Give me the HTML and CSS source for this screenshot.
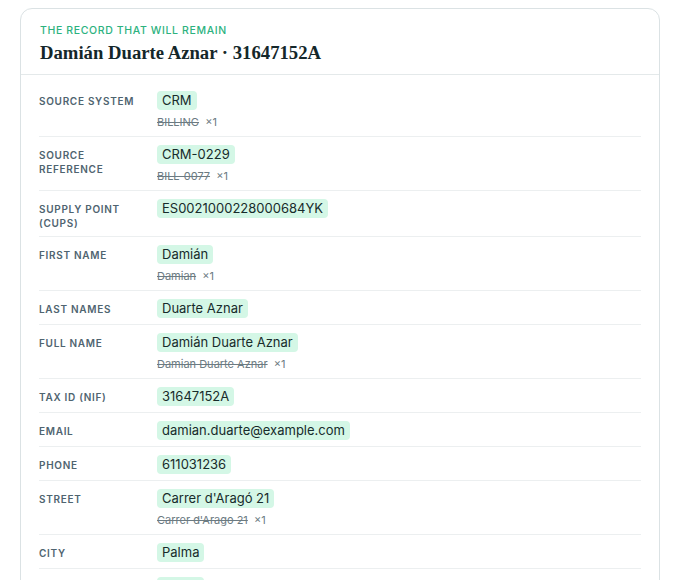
FILE: index.html
```html
<!DOCTYPE html>
<html lang="en">
<head>
  <meta charset="UTF-8">
  <title>Merge preview</title>
  <link rel="stylesheet" href="styles.css">
</head>
<body>

  <!-- Surviving record after the merge -->
  <section class="card">
    <header class="card-head">
      <div class="eyebrow">The record that will remain</div>
      <h1 class="title">Damián Duarte Aznar · 31647152A</h1>
    </header>

    <div class="fields">
      <div class="row">
        <div class="label">Source system</div>
        <div class="value">
          <span class="pill">CRM</span>
          <span class="old"><s>BILLING</s> ×1</span>
        </div>
      </div>
      <div class="row">
        <div class="label">Source reference</div>
        <div class="value">
          <span class="pill">CRM-0229</span>
          <span class="old"><s>BILL-0077</s> ×1</span>
        </div>
      </div>
      <div class="row">
        <div class="label">Supply point (CUPS)</div>
        <div class="value">
          <span class="pill">ES0021000228000684YK</span>
        </div>
      </div>
      <div class="row">
        <div class="label">First name</div>
        <div class="value">
          <span class="pill">Damián</span>
          <span class="old"><s>Damian</s> ×1</span>
        </div>
      </div>
      <div class="row">
        <div class="label">Last names</div>
        <div class="value">
          <span class="pill">Duarte Aznar</span>
        </div>
      </div>
      <div class="row">
        <div class="label">Full name</div>
        <div class="value">
          <span class="pill">Damián Duarte Aznar</span>
          <span class="old"><s>Damian Duarte Aznar</s> ×1</span>
        </div>
      </div>
      <div class="row">
        <div class="label">Tax ID (NIF)</div>
        <div class="value">
          <span class="pill">31647152A</span>
        </div>
      </div>
      <div class="row">
        <div class="label">Email</div>
        <div class="value">
          <span class="pill">damian.duarte@example.com</span>
        </div>
      </div>
      <div class="row">
        <div class="label">Phone</div>
        <div class="value">
          <span class="pill">611031236</span>
        </div>
      </div>
      <div class="row">
        <div class="label">Street</div>
        <div class="value">
          <span class="pill">Carrer d'Aragó 21</span>
          <span class="old"><s>Carrer d'Arago 21</s> ×1</span>
        </div>
      </div>
      <div class="row">
        <div class="label">City</div>
        <div class="value">
          <span class="pill">Palma</span>
        </div>
      </div>
      <div class="row">
        <div class="label">Postal code</div>
        <div class="value">
          <span class="pill">07013</span>
        </div>
      </div>
    </div>
  </section>

</body>
</html>
```

FILE: styles.css
```css
html {
  overflow: hidden;
}

body {
  margin: 0;
  padding: 8px 20px;
  background: #fff;
  font-family: Inter, "Noto Sans", sans-serif;
  color: #172b2b;
}

.card {
  border: 1px solid #dbe2e4;
  border-radius: 12px;
  background: #fff;
}

.card-head {
  padding: 15px 19px 10px;
  border-bottom: 1px solid #e4e9ea;
}

.eyebrow {
  font-size: 10.5px;
  line-height: 14px;
  font-weight: 500;
  letter-spacing: 0.06em;
  text-transform: uppercase;
  color: #2cb27e;
}

.title {
  margin: 4px 0 0;
  font-family: "Liberation Serif", serif;
  font-size: 18.7px;
  line-height: 22px;
  font-weight: 700;
  color: #14272a;
}

.fields {
  padding: 8px 18px 0;
}

.row {
  display: grid;
  grid-template-columns: 118px 1fr;
  padding: 8px 0 6px;
  border-bottom: 1px solid #eceff0;
}

.label {
  margin-top: 3px;
  padding-right: 12px;
  font-size: 10px;
  line-height: 14px;
  font-weight: 600;
  letter-spacing: 0.07em;
  text-transform: uppercase;
  color: #4f6470;
}

.value {
  display: flex;
  flex-direction: column;
  align-items: flex-start;
}

.pill {
  padding: 0 5px;
  border-radius: 4px;
  background: #d4f7e6;
  font-size: 13px;
  line-height: 19px;
  color: #172b2b;
}

.old {
  margin-top: 4px;
  font-size: 11px;
  line-height: 16px;
  color: #6c7b82;
}

.old s {
  margin-right: 3px;
}
```
